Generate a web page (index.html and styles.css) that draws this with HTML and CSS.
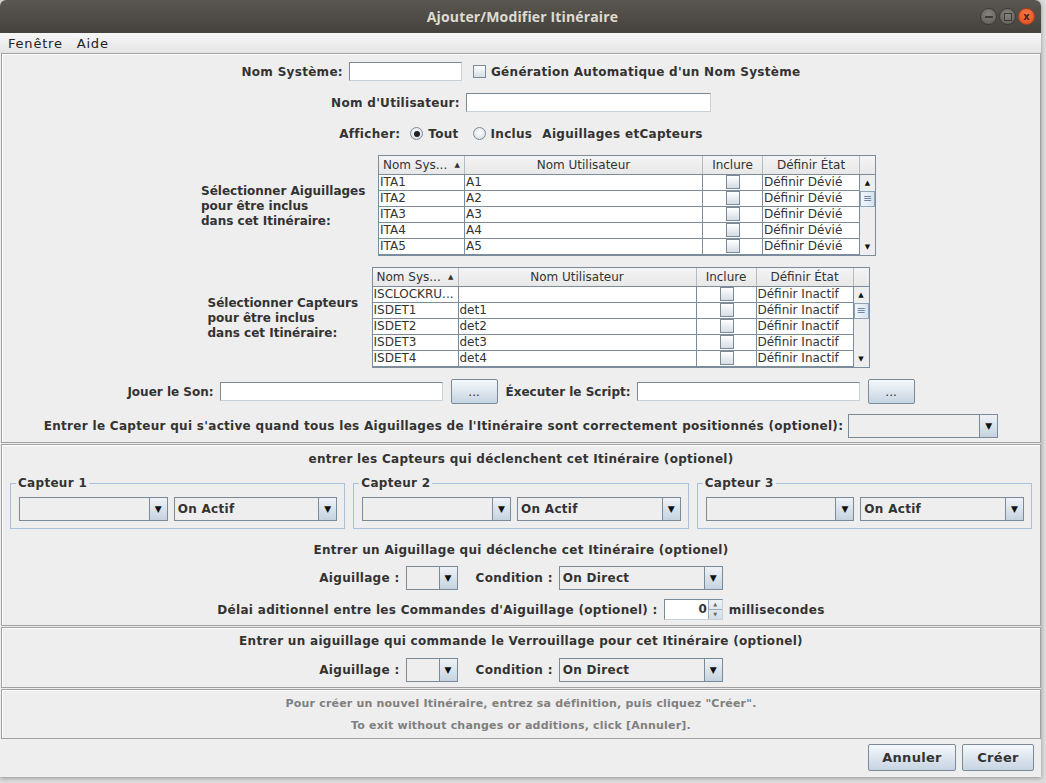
FILE: index.html
```html
<!DOCTYPE html>
<html lang="fr">
<head>
<meta charset="utf-8">
<title>Ajouter/Modifier Itinéraire</title>
<link rel="stylesheet" href="styles.css">
</head>
<body>
<div class="window">
  <div class="titlebar">
    <div class="title">Ajouter/Modifier Itinéraire</div>
    <div class="wbtns">
      <span class="wb"><span class="minbar"></span></span>
      <span class="wb"><span class="maxbox"></span></span>
      <span class="wb close">x</span>
    </div>
  </div>
  <div class="menubar"><span>Fenêtre</span><span>Aide</span></div>
  <div class="content">
    <div class="sec sec1">
      <div class="row r1">
        <span class="lbl">Nom Système:</span>
        <span class="tf w113"></span>
        <span class="cb ml11"></span>
        <span class="lbl ml5">Génération Automatique d'un Nom Système</span>
      </div>
      <div class="row r2">
        <span class="lbl">Nom d'Utilisateur:</span>
        <span class="tf w245"></span>
      </div>
      <div class="row r3">
        <span class="lbl">Afficher:</span>
        <span class="radio on ml10"></span>
        <span class="lbl ml5">Tout</span>
        <span class="radio ml14"></span>
        <span class="lbl ml5">Inclus</span>
        <span class="lbl ml10">Aiguillages etCapteurs</span>
      </div>

      <div class="row trow t1">
        <div class="tlabel w177">Sélectionner Aiguillages<br>pour être inclus<br>dans cet Itinéraire:</div>
        <div class="table">
          <div class="thead">
            <div class="th sort">Nom Sys... <span class="arr">&#9650;</span></div>
            <div class="th">Nom Utilisateur</div>
            <div class="th">Inclure</div>
            <div class="th">Définir État</div>
            <div class="th blank"></div>
          </div>
          <div class="tbody">
            <div class="rows">
              <div class="td">ITA1</div><div class="td">A1</div><div class="td c"><span class="cb"></span></div><div class="td">Définir Dévié</div>
              <div class="td">ITA2</div><div class="td">A2</div><div class="td c"><span class="cb"></span></div><div class="td">Définir Dévié</div>
              <div class="td">ITA3</div><div class="td">A3</div><div class="td c"><span class="cb"></span></div><div class="td">Définir Dévié</div>
              <div class="td">ITA4</div><div class="td">A4</div><div class="td c"><span class="cb"></span></div><div class="td">Définir Dévié</div>
              <div class="td">ITA5</div><div class="td">A5</div><div class="td c"><span class="cb"></span></div><div class="td">Définir Dévié</div>
            </div>
            <div class="vscroll">
              <span class="sarrow">&#9650;</span>
              <span class="thumb">&#8801;</span>
              <span class="sfill"></span>
              <span class="sarrow">&#9660;</span>
            </div>
          </div>
        </div>
      </div>

      <div class="row trow t2">
        <div class="tlabel w164">Sélectionner Capteurs<br>pour être inclus<br>dans cet Itinéraire:</div>
        <div class="table">
          <div class="thead">
            <div class="th sort">Nom Sys... <span class="arr">&#9650;</span></div>
            <div class="th">Nom Utilisateur</div>
            <div class="th">Inclure</div>
            <div class="th">Définir État</div>
            <div class="th blank"></div>
          </div>
          <div class="tbody">
            <div class="rows">
              <div class="td">ISCLOCKRU...</div><div class="td"></div><div class="td c"><span class="cb"></span></div><div class="td">Définir Inactif</div>
              <div class="td">ISDET1</div><div class="td">det1</div><div class="td c"><span class="cb"></span></div><div class="td">Définir Inactif</div>
              <div class="td">ISDET2</div><div class="td">det2</div><div class="td c"><span class="cb"></span></div><div class="td">Définir Inactif</div>
              <div class="td">ISDET3</div><div class="td">det3</div><div class="td c"><span class="cb"></span></div><div class="td">Définir Inactif</div>
              <div class="td">ISDET4</div><div class="td">det4</div><div class="td c"><span class="cb"></span></div><div class="td">Définir Inactif</div>
            </div>
            <div class="vscroll">
              <span class="sarrow">&#9650;</span>
              <span class="thumb">&#8801;</span>
              <span class="sfill"></span>
              <span class="sarrow">&#9660;</span>
            </div>
          </div>
        </div>
      </div>

      <div class="row r-son">
        <span class="lbl tight">Jouer le Son:</span>
        <span class="tf w223 ml5"></span>
        <span class="btn dots ml8">...</span>
        <span class="lbl tight ml8">Éxecuter le Script:</span>
        <span class="tf w223 ml5"></span>
        <span class="btn dots ml8">...</span>
      </div>

      <div class="row r-ent">
        <span class="lbl">Entrer le Capteur qui s'active quand tous les Aiguillages de l'Itinéraire sont correctement positionnés (optionel):</span>
        <span class="combo w150 ml5"><span class="cf"></span><span class="ca">&#9660;</span></span>
      </div>
    </div>

    <div class="sec sec2">
      <div class="stitle">entrer les Capteurs qui déclenchent cet Itinéraire (optionel)</div>
      <div class="groups">
        <fieldset class="grp">
          <legend>Capteur 1</legend>
          <span class="combo w149"><span class="cf"></span><span class="ca">&#9660;</span></span>
          <span class="combo w164 ml6"><span class="cf">On Actif</span><span class="ca">&#9660;</span></span>
        </fieldset>
        <fieldset class="grp">
          <legend>Capteur 2</legend>
          <span class="combo w149"><span class="cf"></span><span class="ca">&#9660;</span></span>
          <span class="combo w164 ml6"><span class="cf">On Actif</span><span class="ca">&#9660;</span></span>
        </fieldset>
        <fieldset class="grp">
          <legend>Capteur 3</legend>
          <span class="combo w149"><span class="cf"></span><span class="ca">&#9660;</span></span>
          <span class="combo w164 ml6"><span class="cf">On Actif</span><span class="ca">&#9660;</span></span>
        </fieldset>
      </div>
      <div class="stitle st2">Entrer un Aiguillage qui déclenche cet Itinéraire (optionel)</div>
      <div class="row r-aig">
        <span class="lbl">Aiguillage :</span>
        <span class="combo w52 ml6"><span class="cf"></span><span class="ca">&#9660;</span></span>
        <span class="lbl ml18">Condition :</span>
        <span class="combo w164 ml6"><span class="cf">On Direct</span><span class="ca">&#9660;</span></span>
      </div>
      <div class="row r-delai">
        <span class="lbl">Délai aditionnel entre les Commandes d'Aiguillage (optionel) :</span>
        <span class="spinner ml6"><span class="sv">0</span><span class="sb"><span class="up">&#9650;</span><span class="dn">&#9660;</span></span></span>
        <span class="lbl ml6">millisecondes</span>
      </div>
    </div>

    <div class="sec sec3">
      <div class="stitle">Entrer un aiguillage qui commande le Verrouillage pour cet Itinéraire (optionel)</div>
      <div class="row r-aig2">
        <span class="lbl">Aiguillage :</span>
        <span class="combo w52 ml6"><span class="cf"></span><span class="ca">&#9660;</span></span>
        <span class="lbl ml18">Condition :</span>
        <span class="combo w164 ml6"><span class="cf">On Direct</span><span class="ca">&#9660;</span></span>
      </div>
    </div>

    <div class="sec sec4">
      <div class="info">Pour créer un nouvel Itinéraire, entrez sa définition, puis cliquez "Créer".</div>
      <div class="info i2">To exit without changes or additions, click [Annuler].</div>
    </div>

    <div class="footer">
      <span class="btn fbtn w88">Annuler</span>
      <span class="btn fbtn w72">Créer</span>
    </div>
  </div>
</div>
</body>
</html>
```

FILE: styles.css
```css
* { box-sizing: border-box; }
html, body { margin: 0; padding: 0; }
body {
  width: 1046px;
  height: 783px;
  background: #dcdcdc;
  font-family: "DejaVu Sans", sans-serif;
  font-size: 12px;
  color: #333333;
  overflow: hidden;
}
.window {
  width: 1041px;
  height: 777px;
  background: #eeeeee;
  border-radius: 6px 6px 0 0;
  overflow: hidden;
  box-shadow: 0 1px 4px rgba(0,0,0,0.35);
  display: flex;
  flex-direction: column;
}
.titlebar {
  height: 33px;
  background: linear-gradient(#5a5751, #45423d);
  display: flex;
  align-items: center;
  justify-content: center;
  position: relative;
  flex: none;
}
.title {
  color: #dfdbd2;
  font-family: "Open Sans", "DejaVu Sans", sans-serif;
  font-weight: bold;
  font-size: 14px;
  letter-spacing: 0.15px;
  margin-left: 4px;
}
.wbtns {
  position: absolute;
  right: 6px;
  top: 8px;
  display: flex;
  gap: 2px;
}
.wb {
  width: 17px;
  height: 17px;
  border-radius: 50%;
  background: radial-gradient(circle at 50% 35%, #86837d, #5b5954);
  border: 1px solid #3a3935;
  display: flex;
  align-items: center;
  justify-content: center;
}
.minbar { width: 8px; height: 2px; background: #3c3b37; }
.maxbox { width: 8px; height: 8px; border: 1px solid #3c3b37; }
.wb.close {
  background: radial-gradient(circle at 50% 35%, #f47b4c, #df4a16);
  border-color: #b3401a;
  color: #4a2010;
  font-size: 10px;
  font-weight: bold;
  line-height: 1;
  font-family: "DejaVu Sans", sans-serif;
}
.menubar {
  height: 20px;
  background: linear-gradient(#f7f7f7, #e4e4e4);
  display: flex;
  align-items: center;
  padding-left: 8px;
  gap: 14px;
  font-family: "DejaVu Sans", sans-serif;
  font-size: 13px;
  color: #222222;
  flex: none;
  letter-spacing: 0.8px;
}
.content {
  flex: 1;
  display: flex;
  flex-direction: column;
  padding: 0 0 0 1px;
}
.sec {
  border: 1px solid #a0a0a0;
  box-shadow: inset 1px 1px #ffffff;
  display: flex;
  flex-direction: column;
  align-items: center;
}
.sec1 { height: 390px; }
.sec2 { height: 182px; margin-top: 1px; }
.sec3 { height: 61px; margin-top: 1px; }
.sec4 { height: 50px; margin-top: 1px; }

.row {
  display: flex;
  align-items: center;
  justify-content: center;
  width: 100%;
}
.lbl { font-weight: bold; white-space: nowrap; letter-spacing: 0.3px; }
.lbl.tight { letter-spacing: 0; }
.ml5 { margin-left: 5px; }
.ml6 { margin-left: 6px; }
.ml8 { margin-left: 8px; }
.ml10 { margin-left: 10px; }
.ml11 { margin-left: 11px; }
.ml14 { margin-left: 14px; }
.ml18 { margin-left: 18px; }

.w52 { width: 52px; }
.w72 { width: 72px; }
.w88 { width: 88px; }
.w113 { width: 113px; }
.w149 { width: 149px; }
.w150 { width: 150px; }
.w164 { width: 164px; }
.w177 { width: 177px; }
.w223 { width: 223px; }
.w245 { width: 245px; }

.tf {
  display: inline-block;
  height: 19px;
  background: #ffffff;
  border: 1px solid #7a8a99;
  border-right-color: #c8d0d8;
  border-bottom-color: #c8d0d8;
  margin-left: 6px;
}
.cb {
  display: inline-block;
  width: 13px;
  height: 13px;
  border: 1px solid #7a8a99;
  background: linear-gradient(#ffffff, #d6dde5);
}
.radio {
  display: inline-block;
  width: 13px;
  height: 13px;
  border-radius: 50%;
  border: 1px solid #7a8a99;
  background: radial-gradient(circle at 50% 40%, #ffffff, #d0d8e0);
  position: relative;
}
.radio.on::after {
  content: "";
  position: absolute;
  left: 2.5px;
  top: 2.5px;
  width: 6px;
  height: 6px;
  border-radius: 50%;
  background: #222;
}

.r1 { height: 19px; margin-top: 8px; }
.r2 { height: 19px; margin-top: 12px; }
.r3 { height: 19px; margin-top: 12px; }

.trow { align-items: center; }
.t1 { margin-top: 12px; padding-left: 35px; }
.t2 { margin-top: 11px; padding-left: 35px; }
.tlabel {
  font-weight: bold;
  line-height: 15px;
  margin-top: 2px;
  white-space: nowrap;
}

.table {
  border: 1px solid #7b8c9d;
  background: #eeeeee;
  display: flex;
  flex-direction: column;
}
.thead {
  display: grid;
  grid-template-columns: 86px 238px 60px 97px 15px;
  height: 19px;
  border-bottom: 1px solid #7b8c9d;
  background: linear-gradient(#f4f4f4, #e8e8e8);
}
.th {
  border-right: 1px solid #b4bcc4;
  text-align: center;
  line-height: 18px;
  color: #333;
  white-space: nowrap;
  overflow: hidden;
}
.th.blank { border-right: none; }
.th.sort { text-align: left; padding-left: 4px; position: relative; }
.arr { font-size: 7px; position: absolute; right: 4px; top: 0; }
.tbody { display: flex; }
.rows {
  display: grid;
  grid-template-columns: 86px 238px 60px 97px;
  grid-auto-rows: 16px;
  background: #ffffff;
}
.td {
  border-right: 1px solid #7b8c9d;
  border-bottom: 1px solid #7b8c9d;
  line-height: 15px;
  padding-left: 1px;
  white-space: nowrap;
  overflow: hidden;
  color: #333;
}
.td.c { display: flex; justify-content: center; align-items: center; }
.td.c .cb { width: 14px; height: 14px; margin-top: -1px; }
.vscroll {
  width: 15px;
  display: flex;
  flex-direction: column;
  background: #eeeeee;
}
.sarrow {
  height: 16px;
  font-size: 7px;
  text-align: center;
  line-height: 16px;
  color: #111;
}
.thumb {
  height: 16px;
  border: 1px solid #8ea4bc;
  background: linear-gradient(90deg, #f2f6fa, #d9e3ee);
  font-size: 11px;
  line-height: 13px;
  text-align: center;
  color: #6d87a4;
}
.sfill { flex: 1; }

.btn {
  display: inline-flex;
  align-items: center;
  justify-content: center;
  border: 1px solid #7a8a99;
  border-radius: 2px;
  background: linear-gradient(#f5f8fb, #c6d4e2);
  font-weight: bold;
  color: #333;
}
.dots { width: 47px; height: 25px; font-weight: normal; }

.r-son { height: 27px; margin-top: 10px; }
.r-ent { height: 24px; margin-top: 9px; }

.combo {
  display: inline-flex;
  height: 24px;
  border: 1px solid #7a8a99;
  background: #eeeeee;
}
.cf {
  flex: 1;
  padding-left: 3px;
  line-height: 22px;
  font-weight: bold;
  white-space: nowrap;
  overflow: hidden;
  letter-spacing: 0.3px;
}
.ca {
  width: 18px;
  border-left: 1px solid #7a8a99;
  background: linear-gradient(#eef2f6, #c5d3e0);
  font-size: 9px;
  text-align: center;
  line-height: 22px;
  color: #111;
}

.stitle { font-weight: bold; margin-top: 6px; line-height: 16px; letter-spacing: 0.3px; }
.st2 { margin-top: 13px; }
.groups {
  display: flex;
  gap: 8px;
  width: 100%;
  padding: 0 8px;
  margin-top: 9px;
}
.grp {
  margin: 0;
  width: 336px;
  min-width: 0;
  height: 53px;
  border: 1px solid #a9c1da;
  padding: 7px 7px 0 8px;
  display: flex;
  align-items: flex-start;
}
.grp legend {
  font-weight: bold;
  padding: 0 2px;
  margin-left: -3px;
  line-height: 14px;
  letter-spacing: 0.3px;
}
.r-aig { height: 24px; margin-top: 8px; }
.r-delai { height: 21px; margin-top: 9px; }
.spinner {
  display: inline-flex;
  width: 59px;
  height: 21px;
  border: 1px solid #7a8a99;
  border-right-color: #c8d0d8;
  border-bottom-color: #c8d0d8;
  background: #ffffff;
}
.sv { flex: 1; text-align: right; padding-right: 1px; font-weight: bold; line-height: 19px; }
.sb {
  width: 14px;
  display: flex;
  flex-direction: column;
  border-left: 1px solid #9aaab9;
  background: linear-gradient(#eef2f6, #d3dde7);
}
.sb span { flex: 1; font-size: 5px; text-align: center; line-height: 9px; color: #666; }
.sb .up { border-bottom: 1px solid #9aaab9; }

.sec3 .stitle { margin-top: 5px; }
.r-aig2 { height: 24px; margin-top: 9px; }

.info {
  font-weight: bold;
  font-size: 11px;
  color: #808080;
  margin-top: 7px;
  line-height: 13px;
  letter-spacing: 0.2px;
}
.info.i2 { margin-top: 9px; }

.footer {
  display: flex;
  justify-content: flex-end;
  gap: 6px;
  padding: 5px 7px 0 0;
}
.fbtn { height: 27px; font-size: 13px; letter-spacing: 0.3px; }
```
